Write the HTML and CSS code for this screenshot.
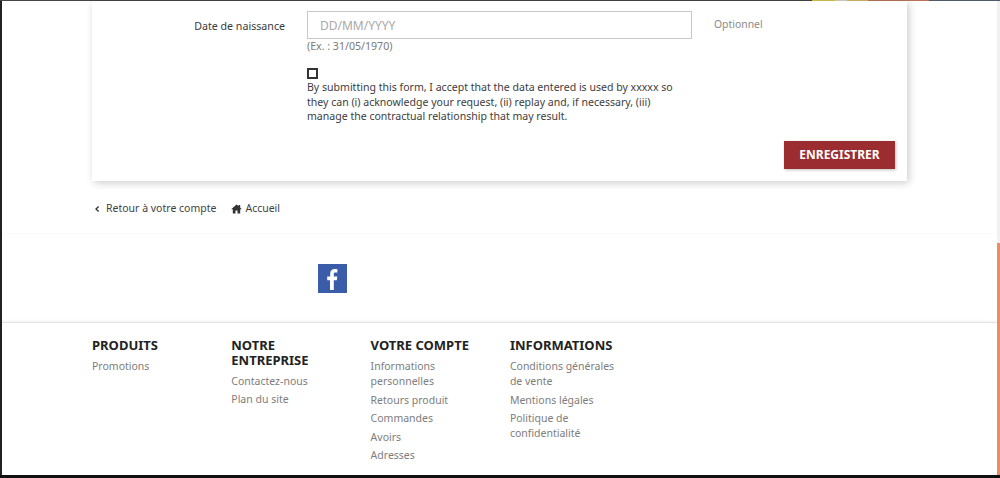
FILE: index.html
```html
<!DOCTYPE html>
<html lang="fr">
<head>
<meta charset="utf-8">
<title>Identité</title>
<link rel="stylesheet" href="styles.css">
</head>
<body>
<div class="topstrip">
  <span class="seg seg-dark"></span><span class="seg seg-yellow"></span><span class="seg seg-pale"></span><span class="seg seg-gold"></span><span class="seg seg-rust"></span><span class="seg seg-slate"></span>
</div>
<div class="window">
  <div class="page">
    <main class="wrap">
      <section class="card">
        <div class="row">
          <label class="label">Date de naissance</label>
          <div class="field">
            <div class="input">DD/MM/YYYY</div>
            <div class="hint">(Ex. : 31/05/1970)</div>
          </div>
          <div class="optional">Optionnel</div>
        </div>
        <div class="consent">
          <span class="checkbox"></span>
          <p>By submitting this form, I accept that the data entered is used by xxxxx so they can (i) acknowledge your request, (ii) replay and, if necessary, (iii) manage the contractual relationship that may result.</p>
        </div>
        <div class="actions"><button class="save" type="button">ENREGISTRER</button></div>
      </section>
      <nav class="links">
        <a class="link">
          <svg class="chev" viewBox="0 0 6 8" width="6" height="8"><path d="M4.600 1.500 2 4l2.600 2.500" fill="none" stroke="#333" stroke-width="1.300"/></svg>
          Retour à votre compte</a>
        <a class="link">
          <svg class="home" viewBox="0 0 11 10" width="11" height="10"><path d="M5.500 0.400 0.200 5.200h1.600v4.400h2.700V6.400h2v3.200h2.700V5.200h1.600L9.200 3.500V1H7.700v1.100z" fill="#333"/></svg>
          Accueil</a>
      </nav>
    </main>
    <div class="social">
      <div class="social-inner">
        <span class="fb"><svg viewBox="0 0 29 29" width="29" height="29"><rect width="29" height="29" fill="#3b5ca8"/><path d="M15.800 26V16.200h3l.5-3.700h-3.500V10.200c0-1 .3-1.700 1.800-1.700h1.800V5.200c-.4 0-1.400-.2-2.700-.2-2.700 0-4.500 1.600-4.500 4.600v2.900H9.200v3.700h2.800V26z" fill="#fff"/></svg></span>
      </div>
    </div>
    <footer class="footer">
      <div class="columns">
        <div class="col">
          <h3>PRODUITS</h3>
          <ul><li>Promotions</li></ul>
        </div>
        <div class="col">
          <h3>NOTRE ENTREPRISE</h3>
          <ul><li>Contactez-nous</li><li>Plan du site</li></ul>
        </div>
        <div class="col">
          <h3>VOTRE COMPTE</h3>
          <ul><li>Informations personnelles</li><li>Retours produit</li><li>Commandes</li><li>Avoirs</li><li>Adresses</li></ul>
        </div>
        <div class="col">
          <h3>INFORMATIONS</h3>
          <ul><li>Conditions générales de vente</li><li>Mentions légales</li><li>Politique de confidentialité</li></ul>
        </div>
      </div>
    </footer>
  </div>
  <div class="sidebar"><div class="side-top"></div><div class="side-orange"></div></div>
</div>
<div class="bottombar"></div>
</body>
</html>
```
FILE: styles.css
```css
* { box-sizing: border-box; }
html, body { margin: 0; padding: 0; height: 478px; overflow: hidden; background: #fff; }
body {
  font-family: "Noto Sans", "Open Sans", sans-serif;
  font-size: 10.500px;
  line-height: 15px;
  color: #3f3f3f;
  display: flex;
  flex-direction: column;
}
.topstrip { display: flex; height: 1px; flex: none; }
.seg { display: block; height: 1px; }
.seg-dark { width: 812px; background: #444; }
.seg-yellow { width: 23px; background: #d8c04a; }
.seg-pale { width: 12px; background: #d6d2c2; }
.seg-gold { width: 21px; background: #d3b760; }
.seg-rust { width: 61px; background: #b9735a; }
.seg-slate { flex: 1; background: #4c5a6c; }
.window { flex: 1; display: flex; min-height: 0; border-left: 2px solid #222; }
.page { flex: 1; min-width: 0; }
.wrap { margin-left: 90px; width: 815px; }
.card {
  height: 180px;
  background: #fff;
  box-shadow: 2px 2px 8px rgba(0,0,0,.2);
  padding-top: 10px;
}
.row { display: flex; align-items: flex-start; }
.label { width: 193px; text-align: right; padding-top: 7.500px; color: #3a3a3a; font-size: 10.650px; }
.field { width: 385px; margin-left: 22px; }
.input {
  height: 28px;
  border: 1px solid #c9c9c9;
  padding: 1px 12px 0;
  line-height: 26px;
  font-size: 12px;
  color: #a8a8a8;
}
.hint { font-size: 10.600px; line-height: 14px; color: #7a7a7a; }
.optional { margin-left: 22px; padding-top: 6px; color: #8a8a8a; font-size: 10.400px; }
.consent { margin-left: 215px; width: 375px; margin-top: 15px; }
.checkbox { display: block; width: 11px; height: 11px; border: 2px solid #333; margin-bottom: 1px; }
.consent p { margin: 0; font-size: 10.550px; line-height: 14.700px; color: #3d3d3d; }
.actions { display: flex; justify-content: flex-end; padding-right: 12px; margin-top: 17px; }
.save {
  width: 111px; height: 28px;
  border: 0;
  background: #9b2d30;
  color: #fff;
  font: 700 12px/28px "Noto Sans", sans-serif;
  padding: 0;
  box-shadow: 1px 1px 3px rgba(0,0,0,.25);
}
.links { display: flex; gap: 15px; margin-top: 20px; height: 15px; font-size: 10.500px; }
.link { display: flex; align-items: center; color: #3f3f3f; }
.chev { margin: 0 6px 0 2px; }
.home { margin-right: 3px; }
.social { margin-top: 17px; border-top: 1px solid #fafafa; height: 89px; }
.social-inner { padding: 30px 0 0 316px; }
.fb { display: block; width: 29px; height: 29px; }
.fb svg { display: block; }
.footer { border-top: 1px solid #e4e4e4; box-shadow: 0 -1px 2px rgba(0,0,0,.06); padding-top: 16px; }
.columns { display: flex; margin-left: 90px; }
.col { width: 139.300px; padding-right: 24px; }
.col h3 { margin: 0 0 5.500px; font-size: 13px; line-height: 14.500px; font-weight: 700; color: #222; position: relative; top: -1px; }
.col ul { list-style: none; margin: 0; padding: 0; }
.col li { font-size: 10.500px; line-height: 15px; color: #7d7d7d; margin-bottom: 3.500px; }
.sidebar { width: 3px; flex: none; display: flex; flex-direction: column; }
.side-top { height: 242px; background: #f1f1f1; }
.side-orange { flex: 1; background: #ef8a63; }
.bottombar { height: 3px; flex: none; background: #111; }
```
